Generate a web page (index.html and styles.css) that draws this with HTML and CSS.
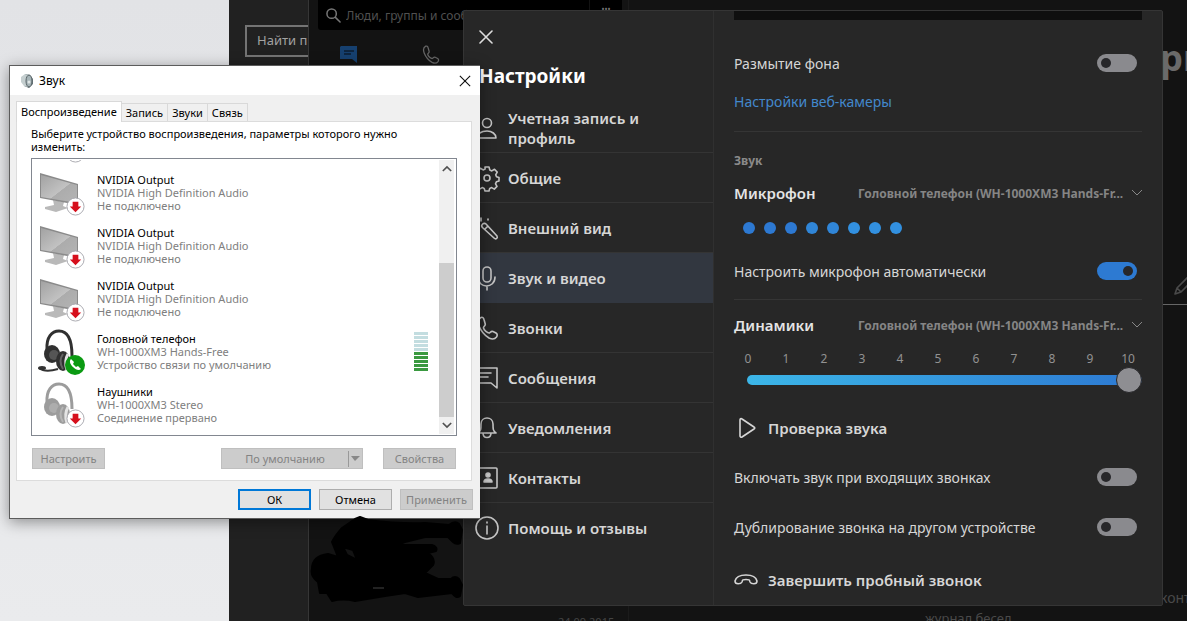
FILE: index.html
```html
<!DOCTYPE html>
<html lang="ru">
<head>
<meta charset="utf-8">
<title>Звук</title>
<link rel="stylesheet" href="styles.css">
</head>
<body>
<svg class="defs" aria-hidden="true">
  <defs>
    <linearGradient id="screen" x1="0" y1="0" x2="1" y2="1">
      <stop offset="0" stop-color="#a2a2a2"/><stop offset="0.55" stop-color="#c2c2c2"/><stop offset="0.56" stop-color="#acacac"/><stop offset="1" stop-color="#b4b4b4"/>
    </linearGradient>
    <symbol id="badge-down" viewBox="0 0 20 20">
      <circle cx="10" cy="10" r="9" fill="#fff" stroke="#a8a8ae"/>
      <path d="M7 5h6v5h3l-6 6-6-6h3z" fill="#d60f1c"/>
    </symbol>
    <symbol id="monitor" viewBox="0 0 48 48">
      <path d="M15 31l11 2-1 4 5 2-12 4-11-3v-2l9-2z" fill="#b9b9b9"/>
      <path d="M2 4l38 11v21L2 29z" fill="#8a8a8a"/>
      <path d="M3 6l36 10v18L3 28z" fill="url(#screen)"/>
      <use href="#badge-down" x="28" y="28" width="19" height="19"/>
    </symbol>
    <symbol id="headset-body" viewBox="0 0 48 48">
      <path d="M9 22C8 9 14 3 21 3c9 0 13 9 13 25" fill="none" stroke="currentColor" stroke-width="3"/>
      <ellipse cx="14" cy="26" rx="8" ry="9" fill="currentColor"/>
      <ellipse cx="16" cy="27" rx="5" ry="5" fill="#fff" fill-opacity=".18"/>
      <ellipse cx="25" cy="33" rx="7" ry="10" fill="currentColor"/>
      <path d="M25 26q-5 7 0 15" fill="none" stroke="#fff" stroke-opacity=".25" stroke-width="2"/>
      <path d="M30 26q-4 7-1 16" fill="none" stroke="#e4e4e4" stroke-width="3"/>
    </symbol>
    <symbol id="phone" viewBox="0 0 24 24">
      <path d="M6 1.500C3 3 2.500 6 4 10c2 5 5 9 10 12 3 1.500 6 1 7.500-1 1-1.500 1-3-.5-4l-3-1.500c-2-.8-2.500 1-3.500 1.500-2 .5-5.500-3-6-5-.2-1.500 2-2 1.800-3.800L9 3.500C8.500 1.500 7.500 1 6 1.500z"/>
    </symbol>
    <symbol id="cross" viewBox="0 0 14 14"><path d="M1 1l12 12M13 1L1 13"/></symbol>
    <symbol id="chevron" viewBox="0 0 10 6"><path d="M0 0l5 5 5-5"/></symbol>
  </defs>
</svg>
<main class="desktop">
  <section class="site">
    <button class="site-search">Найти п</button>
  </section>

  <section class="chat-app">
    <aside class="contacts">
      <div class="contacts-top">
        <label class="people-search">
          <svg class="line-icon" viewBox="0 0 16 16" width="15" height="15"><circle cx="6" cy="6" r="5"/><path d="M10 10l5 5"/></svg>
          <input type="text" aria-label="Поиск" placeholder="Люди, группы и сообщения">
        </label>
        <button class="more" aria-label="Ещё">•••</button>
      </div>
      <div class="contacts-tabs">
        <svg viewBox="0 0 18 18" width="18" height="18"><path d="M1 1h16v17l-5-4H0V2z" fill="#16406f"/><path d="M4 6h10M4 9h7" stroke="#0c1c30" stroke-width="1.500"/></svg>
        <svg class="line-icon" viewBox="0 0 24 24" width="19" height="19"><use href="#phone"/></svg>
      </div>
    </aside>
    <div class="conversation">
      <h1 class="conversation-title">рн</h1>
      <div class="conversation-edit"><svg class="line-icon" viewBox="0 0 22 22" width="22" height="22"><path d="M2 20l2-6L16 2l4 4L8 18zM4 14l4 4"/></svg></div>
      <p class="conversation-hint">конт</p>
      <p class="conversation-note">журнал бесед</p>
    </div>
    <time class="chat-date">24.09.2015</time>
  </section>

  <section class="settings" aria-label="Настройки">
    <nav class="settings-nav">
      <button class="settings-close" aria-label="Закрыть"><svg class="line-icon" width="14" height="14"><use href="#cross"/></svg></button>
      <h2>Настройки</h2>
      <ul>
        <li><a href="#account"><svg class="line-icon" viewBox="0 0 24 24"><circle cx="12" cy="7" r="4.500"/><path d="M2 22c0-4 4-7 10-7 5 0 9 3 9 7z"/></svg>Учетная запись и профиль</a></li>
        <li><a href="#general"><svg class="line-icon" viewBox="0 0 24 24"><circle cx="12" cy="12" r="3"/><path d="M10 1h4l.8 3 2 .9 2.700-1.600 2.700 2.800-1.500 2.700.8 2 2.500.7v3.500l-2.600.8-.9 2 1.500 2.600-2.700 2.700-2.600-1.500-2 .8-.7 2.600h-4l-.8-2.600-2-.8-2.600 1.500-2.700-2.700 1.500-2.600-.9-2L.9 14v-3.500l2.500-.7.8-2-1.500-2.700 2.700-2.800 2.700 1.600 2-.9z"/></svg>Общие</a></li>
        <li><a href="#look"><svg class="line-icon" viewBox="0 0 24 24"><path d="M7 9c1-2 3-2 4-1l11 12c1 2-1 4-3 2L8 12c-1-1-2-2-1-3zM10 13l3-3M6 2v3M13 3v1"/></svg>Внешний вид</a></li>
        <li class="current"><a href="#av"><svg class="line-icon" viewBox="0 0 24 24"><rect x="8" y="1" width="8" height="15" rx="4"/><path d="M3 11c0 12 17 12 17 0M12 20v4"/></svg>Звук и видео</a></li>
        <li><a href="#calls"><svg class="line-icon" viewBox="0 0 24 24"><use href="#phone"/></svg>Звонки</a></li>
        <li><a href="#messages"><svg class="line-icon" viewBox="0 0 24 24"><path d="M2 2h20v20l-6-5H2zM5 7h11M5 11h8"/></svg>Сообщения</a></li>
        <li><a href="#alerts"><svg class="line-icon" viewBox="0 0 24 24"><path d="M3 17c3-2 3-4 3-9 0-8 12-8 12 0 0 5 0 7 3 9zM8 17c0 6 8 6 8 0"/></svg>Уведомления</a></li>
        <li><a href="#people"><svg class="line-icon" viewBox="0 0 24 24"><rect x="3" y="2" width="19" height="20" rx="1"/><circle cx="13" cy="9" r="2" fill="#ccc"/><path d="M9 16c0-4 8-4 8 0z" fill="#ccc"/></svg>Контакты</a></li>
        <li><a href="#help"><svg class="line-icon" viewBox="0 0 24 24"><circle cx="12" cy="12" r="11"/><path d="M12 10v8M12 6v1"/></svg>Помощь и отзывы</a></li>
      </ul>
    </nav>
    <div class="settings-body">
      <div class="camera-preview"></div>
      <label class="switch-row first">Размытие фона<input type="checkbox" class="switch"></label>
      <a class="camera-link" href="#camera">Настройки веб-камеры</a>
      <hr>
      <h3>Звук</h3>
      <div class="device-row">
        <label for="mic">Микрофон</label>
        <select id="mic"><option>Головной телефон (WH-1000XM3 Hands-Fr...</option></select>
        <svg class="line-icon chevron" width="10" height="6"><use href="#chevron"/></svg>
      </div>
      <div class="mic-level"><i></i><i></i><i></i><i></i><i></i><i></i><i></i><i></i></div>
      <label class="switch-row auto">Настроить микрофон автоматически<input type="checkbox" class="switch" checked></label>
      <hr class="tight">
      <div class="device-row">
        <label for="spk">Динамики</label>
        <select id="spk"><option>Головной телефон (WH-1000XM3 Hands-Fr...</option></select>
        <svg class="line-icon chevron" width="10" height="6"><use href="#chevron"/></svg>
      </div>
      <div class="scale"><span>0</span><span>1</span><span>2</span><span>3</span><span>4</span><span>5</span><span>6</span><span>7</span><span>8</span><span>9</span><span>10</span></div>
      <input class="volume" type="range" min="0" max="10" value="10" aria-label="Громкость">
      <button class="action test"><svg class="line-icon" viewBox="0 0 24 24"><path d="M6 4c0-1 1-2 2-1l12 8c1 .5 1 1.500 0 2L8 21c-1 .5-2 0-2-1z"/></svg>Проверка звука</button>
      <label class="switch-row">Включать звук при входящих звонках<input type="checkbox" class="switch"></label>
      <label class="switch-row">Дублирование звонка на другом устройстве<input type="checkbox" class="switch"></label>
      <button class="action end"><svg class="line-icon" viewBox="0 0 24 24"><path d="M1 13C2 9 6 7 12 7s10 2 11 6c0 4-6 3-7 1-.6-2 0-2.500-4-2.500s-3.400.5-4 2.500c-1 2-7 3-7-1z"/></svg>Завершить пробный звонок</button>
    </div>
  </section>

  <section class="sound" aria-label="Звук">
    <header>
      <svg viewBox="0 0 16 16" width="16" height="16"><path d="M6 1l5 1 3 4v5l-4 4-5-2z" fill="#66757a"/><path d="M2 4l4-3 3 1v12l-4-1-3-4z" fill="#c5cfd0"/><ellipse cx="10" cy="8" rx="3" ry="6" fill="#a7b5b8" stroke="#596468"/><circle cx="10" cy="9" r="1.500" fill="#e0e6e6"/></svg>
      <h2>Звук</h2>
      <button aria-label="Закрыть"><svg width="12" height="12" stroke="#111" stroke-width="1.300"><use href="#cross"/></svg></button>
    </header>
    <div class="tabs" role="tablist">
      <button role="tab" aria-selected="true">Воспроизведение</button><button role="tab">Запись</button><button role="tab">Звуки</button><button role="tab">Связь</button>
    </div>
    <div class="sheet">
      <p>Выберите устройство воспроизведения, параметры которого нужно изменить:</p>
      <div class="listbox">
        <ul>
          <li><svg width="48" height="48"><use href="#badge-down" x="28" y="28" width="19" height="19"/></svg></li>
          <li><svg width="48" height="48"><use href="#monitor"/></svg><div><b>NVIDIA Output</b><span>NVIDIA High Definition Audio</span><span>Не подключено</span></div></li>
          <li><svg width="48" height="48"><use href="#monitor"/></svg><div><b>NVIDIA Output</b><span>NVIDIA High Definition Audio</span><span>Не подключено</span></div></li>
          <li><svg width="48" height="48"><use href="#monitor"/></svg><div><b>NVIDIA Output</b><span>NVIDIA High Definition Audio</span><span>Не подключено</span></div></li>
          <li><svg class="active-set" viewBox="0 0 48 48" width="48" height="48"><use href="#headset-body"/><path d="M1 40q6 5 19 1" fill="none" stroke="#333" stroke-width="2"/><ellipse cx="4" cy="40" rx="4" ry="2" fill="#333"/><circle cx="37" cy="37" r="10" fill="#0b9a12"/><path d="M33 31c-2 2-1 5 2 8s6 4 8 2l-3-3-2 1-3-3 1-2z" fill="#fff"/></svg><div><b>Головной телефон</b><span>WH-1000XM3 Hands-Free</span><span>Устройство связи по умолчанию</span></div>
            <div class="meter"><i></i><i></i><i></i><i></i><i></i><i></i><i></i><i></i><i></i><i></i></div></li>
          <li><svg class="idle-set" viewBox="0 0 48 48" width="48" height="48"><use href="#headset-body"/><use href="#badge-down" x="28" y="28" width="19" height="19"/></svg><div><b>Наушники</b><span>WH-1000XM3 Stereo</span><span>Соединение прервано</span></div></li>
        </ul>
        <div class="scrollbar">
          <button aria-label="Вверх"><svg viewBox="-1 -1 12 8" width="10" height="7"><path d="M0 6l5-5 5 5"/></svg></button>
          <div class="thumb"></div>
          <button aria-label="Вниз"><svg viewBox="-1 -1 12 8" width="10" height="7"><path d="M0 0l5 5 5-5"/></svg></button>
        </div>
      </div>
      <div class="sheet-buttons">
        <button class="push" disabled>Настроить</button>
        <button class="push split" disabled><span>По умолчанию</span><svg width="14" height="16" viewBox="0 0 14 16"><path d="M0 0v16" stroke="#999" stroke-width="2"/><path d="M3 5h9L7 10z" fill="#888"/></svg></button>
        <button class="push" disabled>Свойства</button>
      </div>
    </div>
    <footer>
      <button class="push default">ОК</button>
      <button class="push">Отмена</button>
      <button class="push" disabled>Применить</button>
    </footer>
  </section>

  <svg class="scribble" viewBox="0 0 156 90" width="156" height="90">
    <path fill-rule="evenodd" stroke="#000" stroke-width="2" stroke-linejoin="round" d="M51 3L59 6Q90 10 116 9L140 11Q146 6 150 10L153 16 151 29Q147 31 144 28L139 23H116L96 28 88 31H123Q129 33 127 37L119 39Q127 45 124 51L116 59 129 65H142Q146 61 150 65L153 71 151 82Q147 85 143 79L109 83 96 79 76 82 46 87Q34 84 23 87L18 79H11L9 68Q1 62 3 55 3 42 19 40L29 43 23 28Q26 22 33 14L46 5zM34 33L38 41 48 46 44 36z"/>
    <path stroke="#444" d="M64 74h11"/>
  </svg>
</main>
</body>
</html>
```
FILE: styles.css
```css
* { box-sizing: border-box; }
body { margin: 0; font-family: "Noto Sans", "Open Sans", sans-serif; color: #d6d6d6; }
h1, h2, h3, p, ul { margin: 0; padding: 0; }
ul { list-style: none; }
button { font: inherit; color: inherit; background: none; border: 0; padding: 0; }
a { color: inherit; text-decoration: none; }
.defs { position: absolute; width: 0; height: 0; }
.line-icon { fill: none; stroke: currentColor; stroke-width: 1.6; stroke-linecap: round; stroke-linejoin: round; flex: none; overflow: visible; }

.desktop { position: relative; height: 100vh; overflow: hidden; background: linear-gradient(#e2e3e6, #eaebed); }

/* Windows on the desktop */
.site { position: absolute; left: 229px; top: 0; right: 0; bottom: 0; background: #212121; }
.chat-app { position: absolute; left: 308px; top: 0; right: 0; bottom: 0; background: #131313; border-left: 1px solid #363636; display: flex; }
.settings { position: absolute; left: 463px; top: 10px; right: 24px; bottom: 15px; background: #272727; border: 1px solid #353535; border-radius: 2px; display: grid; grid-template-columns: 250px 1fr; }
.sound { position: absolute; left: 9px; top: 65px; width: 471px; background: #f0f0f0; border: 1px solid #5c5c5c; border-right: 0; box-shadow: 0 3px 14px rgba(0, 0, 0, .4); color: #000; font-size: 11px; line-height: 13px; }
.scribble { position: absolute; left: 309px; top: 514px; }

/* Page behind */
.site-search { margin: 25px 0 0 16px; width: 120px; height: 32px; border: 2px solid #747474; padding: 0 0 2px 10px; text-align: left; font-size: 13px; color: #a2a2a2; }

/* Chat window */
.contacts { width: 320px; flex: none; border-right: 1px solid #1b1b1b; }
.contacts-top { display: flex; gap: 1px; padding-left: 9px; height: 30px; }
.people-search { display: flex; align-items: center; gap: 5px; width: 271px; padding-left: 8px; background: #000; border-radius: 0 0 0 3px; color: #777; }
.people-search input { flex: 1; min-width: 0; border: 0; padding: 0; background: none; font: 12px "Noto Sans", sans-serif; }
.people-search input::placeholder { color: #505050; opacity: 1; }
.more { width: 32px; background: #000; color: #777; font-size: 8px; padding-bottom: 14px; }
.contacts-tabs { display: flex; gap: 63px; padding: 15px 0 0 31px; color: #666; }
.conversation { flex: 1; display: flex; flex-direction: column; color: #4a4a4a; font-size: 14px; line-height: 20px; }
.conversation-title { margin-top: 33px; align-self: flex-end; width: 27px; font-size: 36px; line-height: 50px; color: #6a6a6a; }
.conversation-edit { height: 222px; border-bottom: 1px solid #666; display: flex; justify-content: flex-end; align-items: flex-end; padding-bottom: 8px; }
.conversation-edit svg { margin-right: -8px; }
.conversation-hint { margin-top: 283px; align-self: flex-end; width: 27px; }
.conversation-note { padding-left: 296px; font-size: 13px; }
.conversation > * { flex: none; }
.chat-date { position: absolute; left: 249px; bottom: -8px; font-size: 11px; color: #444; }

/* Settings navigation */
.settings-nav { border-right: 1px solid #303030; }
.settings-close { display: flex; margin: 19px 0 0 15px; width: 14px; height: 14px; color: #ddd; }
.settings-nav h2 { margin: 19px 0 14px 15px; font-size: 19px; line-height: 26px; color: #fff; }
.settings-nav li { border-bottom: 1px solid #343434; }
.settings-nav li:last-child { border: 0; }
.settings-nav a { display: flex; align-items: center; gap: 9px; height: 49px; padding: 1px 60px 0 11px; font-size: 15px; font-weight: 600; line-height: 20px; }
.settings-nav a svg { width: 24px; height: 24px; color: #c4c4c4; }
.settings-nav .current { background: #323740; border-color: #323740; }

/* Settings content */
.settings-body { padding: 0 20px; display: flex; flex-direction: column; font-size: 15px; }
.camera-preview { height: 9px; background: #0f0f0f; }
.switch-row { display: flex; align-items: center; justify-content: space-between; height: 50px; padding-right: 5px; font-size: 14px; }
.switch-row.first { margin-top: 18px; }
.switch { appearance: none; margin: 0; width: 40px; height: 18px; border-radius: 9px; background: #8a8a8e; display: flex; align-items: center; padding: 0 4px; }
.switch::before { content: ""; width: 10px; height: 10px; border-radius: 50%; background: #27272a; }
.switch:checked { background: #2d7ad2; justify-content: flex-end; }
.camera-link { line-height: 28px; font-size: 14px; color: #4388cc; }
hr { width: 100%; height: 1px; margin: 15px 0 19px; border: 0; background: #353535; }
h3 { font-size: 12px; line-height: 20px; color: #8a8a8a; }
.device-row { display: flex; align-items: center; height: 44px; }
.device-row label { width: 124px; font-weight: 600; color: #e4e4e4; }
.device-row select { appearance: none; flex: 1; min-width: 0; border: 0; padding: 0; background: none; font: 700 12px "Noto Sans", sans-serif; color: #858585; }
.chevron { color: #888; stroke-width: 1; }
.mic-level { display: flex; gap: 9px; padding: 7px 9px 5px; }
.mic-level i { width: 12px; height: 12px; border-radius: 50%; background: #2d79d2; }
.mic-level i:nth-child(n+4) { background: #3086d8; }
.mic-level i:nth-child(n+6) { background: #3290e0; }
.auto { margin-top: 7px; }
hr.tight { margin: 3px 0; }
.scale { display: flex; justify-content: space-between; margin: 2px 4px 0; font-size: 12px; line-height: 20px; color: #929292; }
.scale span { width: 20px; text-align: center; }
.volume { appearance: none; margin: 0 0 0 13px; height: 22px; background: none; }
.volume::-webkit-slider-runnable-track { height: 10px; border-radius: 5px; background: linear-gradient(90deg, #3cb6e8, #2d79d2); }
.volume::-webkit-slider-thumb { appearance: none; width: 26px; height: 26px; margin-top: -8px; border-radius: 50%; background: #8e8e92; border: 1px solid #27272a; }
.action { display: flex; align-items: center; gap: 10px; height: 48px; font-weight: 600; }
.action svg { width: 24px; height: 24px; }
.test { margin-top: 13px; }
.end { margin-top: 4px; }

/* Sound window */
.sound header { display: flex; align-items: center; gap: 4px; height: 29px; padding: 0 9px; background: #fff; }
.sound header h2 { flex: 1; font-size: 12px; font-weight: 400; }
.sound header button { display: flex; width: 12px; height: 12px; }
.tabs { display: flex; align-items: flex-end; padding: 6px 6px 0; }
.tabs button { height: 18px; padding: 0 4px; border: 1px solid #d9d9d9; border-width: 1px 1px 0 0; }
.tabs button[aria-selected] { height: 21px; margin-bottom: -1px; padding-bottom: 2px; background: #fff; border-left-width: 1px; }
.sheet { margin: 0 8px 0 6px; padding: 5px 14px 11px; border: 1px solid #dcdcdc; background: #fff; }
.sheet p { padding-right: 40px; }
.listbox { display: flex; height: 278px; margin-top: 5px; padding: 1px; border: 1px solid #828790; }
.listbox ul { flex: 1; display: flex; flex-direction: column; justify-content: flex-end; overflow: hidden; padding-bottom: 3px; }
.listbox li { flex: none; height: 53px; display: flex; align-items: center; gap: 11px; padding: 0 11px 0 5px; color: #808080; }
.listbox li svg { flex: none; margin-top: 1px; }
.listbox b, .listbox span { display: block; font-weight: 400; }
.listbox b { color: #000; }
.active-set { color: #303030; }
.idle-set { color: #9c9c9c; }
.meter { margin-left: auto; display: grid; gap: 1px; }
.meter i { width: 14px; height: 3px; background: #c3dde0; }
.meter i:nth-child(n+6) { background: #3a9940; }
.scrollbar { width: 15px; margin-right: 1px; display: flex; flex-direction: column; justify-content: space-between; background: #f0f0f0; }
.scrollbar button { height: 17px; display: grid; place-items: center; }
.scrollbar svg { fill: none; stroke: #505050; stroke-width: 2; }
.thumb { height: 154px; margin-top: auto; background: #cdcdcd; }
.push { width: 73px; height: 21px; border: 1px solid #adadad; background: #e1e1e1; }
.push:disabled { background: #ccc; border-color: #bfbfbf; color: #838383; }
.default { border: 2px solid #0078d7; }
.sheet-buttons { display: flex; margin-top: 12px; gap: 20px; padding: 0 1px; }
.split { width: 142px; margin-left: auto; display: flex; align-items: center; }
.split span { flex: 1; }
.sound footer { display: flex; justify-content: flex-end; gap: 8px; padding: 8px 7px; }
```
